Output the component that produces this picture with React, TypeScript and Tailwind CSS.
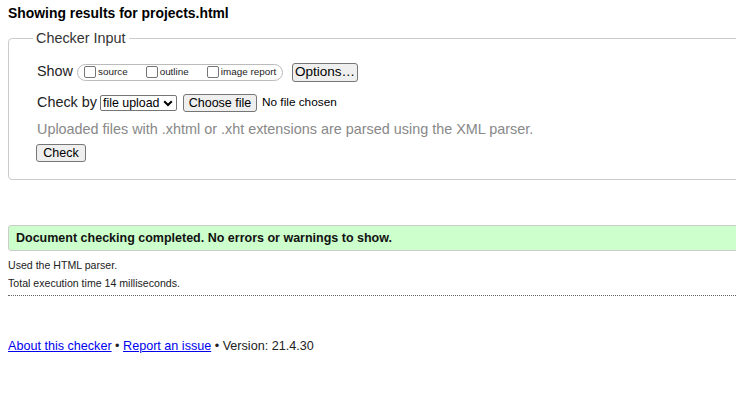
import React from 'react';

function Box({ label }: { label: string }) {
  return (
    <span className="flex items-center">
      <span className="w-[12px] h-[12px] border border-[#767676] rounded-[2px] bg-white" />
      <span className="ml-[2px] text-[9.9px] leading-[12px] text-[#222]">{label}</span>
    </span>
  );
}

const btn =
  'bg-[#efefef] border border-[#767676] rounded-[3px] text-black flex items-center justify-center leading-none';

export default function App() {
  return (
    <div className="w-[736px] h-[417px] overflow-hidden bg-white text-black font-['Liberation_Sans',Arial,sans-serif]">
      <div className="w-[820px] px-2">
        <h2 className="pt-[5px] text-[13.9px] font-bold leading-[17px]">Showing results for projects.html</h2>

        <fieldset className="mt-[8px] border border-[#ccc] rounded-[4px] pl-[28px] pb-[17px]">
          <legend className="-ml-[4px] px-[3px] text-[14.4px] leading-[17px] text-[#333]">Checker Input</legend>

          <div className="mt-[15px] flex items-center h-[20px]">
            <span className="text-[14.4px] text-[#222]">Show</span>
            <div className="ml-[4px] w-[206px] h-[17px] border border-[#bbb] rounded-full flex items-center pl-[6px] gap-[18px]">
              <Box label="source" />
              <Box label="outline" />
              <Box label="image report" />
            </div>
            <button className={`${btn} ml-[9px] w-[66px] h-[19px] text-[13.5px]`}>Options…</button>
          </div>

          <div className="mt-[12px] flex items-center h-[18px]">
            <span className="text-[14.4px] text-[#222]">Check by</span>
            <div className="ml-[3px] w-[77px] h-[16px] border border-[#767676] rounded-[2px] flex items-center pl-[2px] text-[12.4px]">
              <span>file upload</span>
              <svg className="ml-[3px]" width="10" height="7" viewBox="0 0 10 7">
                <path d="M1.2 1.2 L5 5 L8.8 1.2" fill="none" stroke="#000" strokeWidth="2" />
              </svg>
            </div>
            <button className={`${btn} ml-[6px] w-[74px] h-[18px] text-[12.5px]`}>Choose file</button>
            <span className="ml-[5px] text-[11.8px]">No file chosen</span>
          </div>

          <p className="mt-[9px] text-[14.4px] leading-[17px] text-[#888]">
            Uploaded files with .xhtml or .xht extensions are parsed using the XML parser.
          </p>

          <button className={`${btn} mt-[6px] -ml-[1px] w-[50px] h-[18px] text-[12.5px]`}>Check</button>
        </fieldset>

        <div className="mt-[45px] h-[26px] bg-[#ccffcc] border border-[#ccc] rounded-l-[3px] flex items-center pl-[7px]">
          <span className="text-[12.5px] font-bold text-[#111]">Document checking completed. No errors or warnings to show.</span>
        </div>

        <p className="mt-[5px] text-[10.6px] leading-[18px] text-[#222]">Used the HTML parser.</p>
        <p className="text-[10.6px] leading-[18px] text-[#222]">Total execution time 14 milliseconds.</p>
        <div className="mt-[3px] border-t border-dotted border-[#666]" />

        <p className="mt-[42px] text-[12.6px] leading-[17px] text-[#222]">
          <a href="#" className="text-[#0000ee] underline">About this checker</a>
          {' • '}
          <a href="#" className="text-[#0000ee] underline">Report an issue</a>
          {' • Version: 21.4.30'}
        </p>
      </div>
    </div>
  );
}
